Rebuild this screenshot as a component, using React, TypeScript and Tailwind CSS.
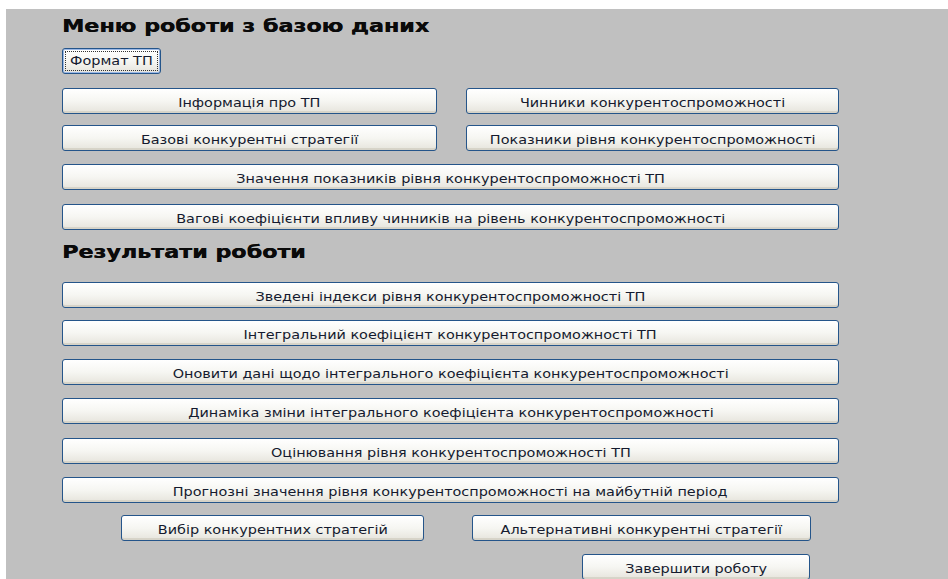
import React from "react";

const font = { fontFamily: '"DejaVu Sans", Verdana, sans-serif' };

// Wide caption text, as the old form renders it
function Caption({ children }: { children: React.ReactNode }) {
  return (
    <span className="inline-block whitespace-nowrap origin-center scale-x-[1.2]">{children}</span>
  );
}

function Btn({
  label,
  className = "",
  focused = false,
}: {
  label: string;
  className?: string;
  focused?: boolean;
}) {
  return (
    <button
      type="button"
      className={
        "h-[26px] shrink-0 rounded-[3px] border border-[#25558a] bg-gradient-to-b from-[#ffffff] via-[#f6f6f2] to-[#e6e4dc] text-[12px] leading-none text-[#141a2e] flex items-center justify-center " +
        (focused
          ? "p-[2px] border-[#1d4b84] shadow-[inset_0_0_0_1px_#9bb8e6] "
          : "pt-[4px] shadow-[inset_0_-2px_0_rgba(200,196,182,0.55)] ") +
        className
      }
      style={font}
    >
      {focused ? (
        <span className="flex h-full w-full items-center justify-center border border-dotted border-[#333]">
          <Caption>{label}</Caption>
        </span>
      ) : (
        <Caption>{label}</Caption>
      )}
    </button>
  );
}

function Heading({ children, className = "" }: { children: React.ReactNode; className?: string }) {
  return (
    <div
      className={
        "text-[18px] font-bold leading-[22px] text-[#0a0a0a] [text-shadow:0.4px_0_0_#0a0a0a] " +
        className
      }
    >
      <span className="inline-block whitespace-nowrap origin-left scale-x-[1.235]">{children}</span>
    </div>
  );
}

export default function App() {
  return (
    <div className="h-[579px] w-[948px] overflow-hidden bg-white pl-[6px] pt-[9px]" style={font}>
      <div className="flex h-full flex-col bg-[#c0c0c0] pl-[56px] pt-[6px]">
        <Heading>Меню роботи з базою даних</Heading>

        <div className="mt-[11px] flex">
          <Btn label="Формат ТП" focused className="w-[99px] h-[25px]" />
        </div>

        <div className="mt-[14px] flex w-[777px] gap-[29px]">
          <Btn label="Інформація про ТП" className="w-[375px]" />
          <Btn label="Чинники конкурентоспроможності" className="w-[373px]" />
        </div>
        <div className="mt-[11px] flex w-[777px] gap-[29px]">
          <Btn label="Базові конкурентні стратегії" className="w-[375px]" />
          <Btn label="Показники рівня конкурентоспроможності" className="w-[373px]" />
        </div>
        <Btn
          label="Значення показників рівня конкурентоспроможності ТП"
          className="mt-[13px] w-[777px]"
        />
        <Btn
          label="Вагові коефіцієнти впливу чинників на рівень конкурентоспроможності"
          className="mt-[14px] w-[777px]"
        />

        <Heading className="mt-[11px]">Результати роботи</Heading>

        <Btn
          label="Зведені індекси рівня конкурентоспроможності ТП"
          className="mt-[19px] w-[777px]"
        />
        <Btn
          label="Інтегральний коефіцієнт конкурентоспроможності ТП"
          className="mt-[12px] w-[777px]"
        />
        <Btn
          label="Оновити дані щодо інтегрального коефіцієнта конкурентоспроможності"
          className="mt-[13px] w-[777px]"
        />
        <Btn
          label="Динаміка зміни інтегрального коефіцієнта конкурентоспроможності"
          className="mt-[13px] w-[777px]"
        />
        <Btn
          label="Оцінювання рівня конкурентоспроможності ТП"
          className="mt-[14px] w-[777px]"
        />
        <Btn
          label="Прогнозні значення рівня конкурентоспроможності на майбутній період"
          className="mt-[13px] w-[777px]"
        />

        <div className="mt-[12px] flex pl-[59px]">
          <Btn label="Вибір конкурентних стратегій" className="w-[303px]" />
          <Btn label="Альтернативні конкурентні стратегії" className="ml-[48px] w-[339px]" />
        </div>
        <div className="mt-[13px] flex pl-[520px]">
          <Btn label="Завершити роботу" className="w-[228px]" />
        </div>
      </div>
    </div>
  );
}
